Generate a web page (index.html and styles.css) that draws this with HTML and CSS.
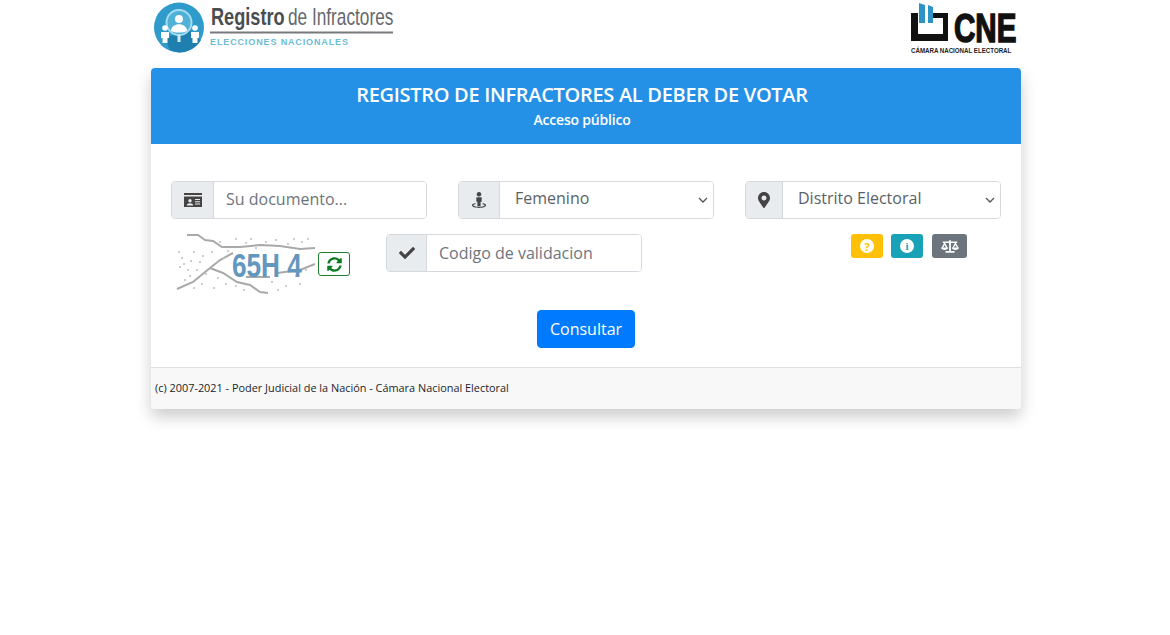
FILE: index.html
```html
<!DOCTYPE html>
<html lang="es">
<head>
  <meta charset="UTF-8">
  <title>Registro de Infractores</title>
  <link rel="stylesheet" href="styles.css">
</head>
<body>

<div class="container">
  <!-- Logos -->
  <div class="logos">
    <svg class="logo-left" viewBox="0 0 250 56" width="250" height="56">
      <circle cx="28" cy="27.500" r="25" fill="#2f9bcb"/>
      <path d="M28 52.500A25 25 0 0 0 50 40L38 30 14 38 19 50Z" fill="#1f7fae"/>
      <circle cx="28" cy="22.500" r="12.500" fill="#4fb0d8" stroke="#a5dcf0" stroke-width="2"/>
      <circle cx="28" cy="19" r="4" fill="#fff"/>
      <path d="M20 31c0-9 16-9 16 0-4 2-12 2-16 0Z" fill="#fff"/>
      <rect x="26.500" y="35" width="3" height="7" fill="#cfeaf5"/>
      <circle cx="14" cy="28" r="2.800" fill="#fff"/>
      <path d="M10 32h8v6h-1.500v5h-5v-5H10Z" fill="#fff"/>
      <circle cx="44" cy="28" r="2.800" fill="#fff"/>
      <path d="M40 32h8v6h-1.500v5h-5v-5H40Z" fill="#fff"/>
      <text class="logo-strong" transform="translate(60 25) scale(.79 1)">Registro</text>
      <text class="logo-light" transform="translate(137 25) scale(.75 1)">de Infractores</text>
      <rect x="59" y="31.500" width="183" height="2" fill="#77797c"/>
      <text class="logo-sub" x="59" y="44.500" textLength="138">ELECCIONES NACIONALES</text>
    </svg>
    <svg class="logo-right" viewBox="0 0 115 56" width="115" height="56">
      <path d="M5 13h7v21h25V18H26v-5h16v28H5Z" fill="#111"/>
      <path d="M13 3l6 2v18h-6ZM22 5l5 2v16h-5Z" fill="#2d93c4"/>
      <text class="logo-cne" transform="translate(48 42) scale(.74 1)">CNE</text>
      <text class="logo-caption" transform="translate(5 53) scale(.77 1)">CÁMARA NACIONAL ELECTORAL</text>
    </svg>
  </div>

  <div class="card">
    <div class="card-header">
      <h1>REGISTRO DE INFRACTORES AL DEBER DE VOTAR</h1>
      <p>Acceso público</p>
    </div>

    <div class="card-body">
      <!-- Fila de campos -->
      <div class="fields">
        <div class="input-group">
          <span class="addon addon-id">
            <svg class="icon icon-id" viewBox="0 0 18 14"><path d="M0 0h18v2H0Z"/><path d="M0 3.500h18V14H0ZM6 6a1.700 1.700 0 1 0 0 3.400A1.700 1.700 0 0 0 6 6ZM2.800 12.500h6.400c0-3-6.400-3-6.400 0ZM11 6v1h5V6Zm0 2.200v1h5v-1Zm0 2.200v1h5v-1Z" fill-rule="evenodd"/></svg>
          </span>
          <input type="text" placeholder="Su documento...">
        </div>
        <div class="input-group">
          <span class="addon">
            <svg class="icon icon-street" viewBox="0 0 18 18"><circle cx="9" cy="2.500" r="2.500"/><path d="M6 6h6v5h-1.200v5H7.200v-5H6Z"/><path d="M5 12.500C2.500 13 1 14 1 15c0 1.700 3.500 3 8 3s8-1.300 8-3c0-1-1.500-2-4-2.500v1.300c1.500.4 2.500.8 2.500 1.200 0 .8-2.900 1.700-6.500 1.700s-6.500-.9-6.500-1.700c0-.4 1-.8 2.500-1.200Z"/></svg>
          </span>
          <select>
            <option>Femenino</option>
            <option>Masculino</option>
          </select>
        </div>
        <div class="input-group">
          <span class="addon addon-marker">
            <svg class="icon icon-marker" viewBox="0 0 384 512"><path d="M172.268 501.670C26.970 291.031 0 269.413 0 192 0 85.961 85.961 0 192 0s192 85.961 192 192c0 77.413-26.970 99.031-172.268 309.670-9.535 13.774-29.930 13.773-39.464 0zM192 272c44.183 0 80-35.817 80-80s-35.817-80-80-80-80 35.817-80 80 35.817 80 80 80z"/></svg>
          </span>
          <select>
            <option>Distrito Electoral</option>
          </select>
        </div>
      </div>

      <!-- Captcha y validacion -->
      <div class="validation">
        <div class="captcha">
          <svg class="captcha-img" viewBox="0 0 140 60" width="140" height="60">
            <path class="captcha-line" d="M11 1h11l7 5 8 1 9 6 18 0 20-2 20 1 20 3 15-1M1 55l16-7 17-14 10-8 13-7M34 34l13 5 14 9 13 3 10 7 8 1M101 39l23-3 15-6M70 43h24"/>
            <g class="captcha-dots">
              <circle cx="6" cy="24" r="1"/><circle cx="12" cy="36" r="1"/><circle cx="18" cy="18" r="1"/><circle cx="9" cy="46" r="1"/>
              <circle cx="24" cy="28" r="1"/><circle cx="30" cy="40" r="1"/><circle cx="44" cy="8" r="1"/><circle cx="52" cy="17" r="1"/>
              <circle cx="70" cy="9" r="1"/><circle cx="80" cy="14" r="1"/><circle cx="100" cy="6" r="1"/><circle cx="112" cy="10" r="1"/>
              <circle cx="126" cy="8" r="1"/><circle cx="132" cy="5" r="1"/><circle cx="120" cy="42" r="1"/><circle cx="110" cy="52" r="1"/>
              <circle cx="60" cy="52" r="1"/><circle cx="38" cy="54" r="1"/><circle cx="26" cy="50" r="1"/><circle cx="130" cy="36" r="1"/>
              <circle cx="15" cy="27" r="1"/><circle cx="4" cy="33" r="1"/><circle cx="48" cy="24" r="1"/><circle cx="96" cy="48" r="1"/>
              <circle cx="3" cy="18" r="1"/><circle cx="8" cy="30" r="1"/><circle cx="14" cy="42" r="1"/><circle cx="21" cy="36" r="1"/>
              <circle cx="27" cy="22" r="1"/><circle cx="36" cy="18" r="1"/><circle cx="60" cy="5" r="1"/><circle cx="75" cy="5" r="1"/>
              <circle cx="90" cy="8" r="1"/><circle cx="118" cy="5" r="1"/><circle cx="68" cy="56" r="1"/><circle cx="50" cy="50" r="1"/>
              <circle cx="102" cy="56" r="1"/><circle cx="124" cy="50" r="1"/><circle cx="42" cy="44" r="1"/><circle cx="18" cy="54" r="1"/>
            </g>
            <text class="captcha-text" transform="translate(56 42.500) scale(.77 1)">65H 4</text>
          </svg>
          <button class="btn-refresh" type="button">
            <svg class="icon-sync" viewBox="0 0 512 512"><path d="M370.720 133.280C339.458 104.008 298.888 87.962 255.848 88c-77.458.068-144.328 53.178-162.791 126.850-1.344 5.363-6.122 9.150-11.651 9.150H24.103c-7.498 0-13.194-6.807-11.807-14.176C33.933 94.924 134.813 8 256 8c66.448 0 126.791 26.136 171.315 68.685L463.030 40.970C478.149 25.851 504 36.559 504 57.941V192c0 13.255-10.745 24-24 24H345.941c-21.382 0-32.090-25.851-16.971-40.971l41.750-41.749zM32 296h134.059c21.382 0 32.090 25.851 16.971 40.971l-41.750 41.750c31.262 29.273 71.835 45.319 114.876 45.280 77.418-.07 144.315-53.144 162.787-126.849 1.344-5.363 6.122-9.150 11.651-9.150h57.304c7.498 0 13.194 6.807 11.807 14.176C478.067 417.076 377.187 504 256 504c-66.448 0-126.791-26.136-171.315-68.685L48.970 471.030C33.851 486.149 8 475.441 8 454.059V320c0-13.255 10.745-24 24-24z"/></svg>
          </button>
        </div>
        <div class="input-group">
          <span class="addon">
            <svg class="icon icon-check" viewBox="0 0 512 512"><path d="M173.898 439.404l-166.400-166.400c-9.997-9.997-9.997-26.206 0-36.204l36.203-36.204c9.997-9.998 26.207-9.998 36.204 0L192 312.690 432.095 72.596c9.997-9.997 26.207-9.997 36.204 0l36.203 36.204c9.997 9.997 9.997 26.206 0 36.204l-294.400 294.401c-9.998 9.997-26.207 9.997-36.204-.001z"/></svg>
          </span>
          <input type="text" placeholder="Codigo de validacion">
        </div>
        <div class="help-buttons">
          <span class="btn-help btn-yellow"><span class="dot dot-yellow">?</span></span>
          <span class="btn-help btn-teal"><span class="dot dot-teal">i</span></span>
          <span class="btn-help btn-gray">
            <svg class="icon-scale" viewBox="0 0 20 14"><path d="M9 0h2v12h4v2H5v-2h4Z"/><path d="M2 1.500h16v1.600H2Z"/><path d="M4 2L.6 8.500h1.700L4 5.200l1.700 3.300h1.700ZM16 2l-3.400 6.500h1.700L16 5.200l1.700 3.300h1.700Z"/><path d="M0 8.200h8c0 3.600-8 3.600-8 0ZM12 8.200h8c0 3.600-8 3.600-8 0Z"/></svg>
          </span>
        </div>
      </div>

      <div class="actions">
        <button class="btn-primary" type="button">Consultar</button>
      </div>
    </div>

    <div class="card-footer">(c) 2007-2021 - Poder Judicial de la Nación - Cámara Nacional Electoral</div>
  </div>
</div>

</body>
</html>
```

FILE: styles.css
```css
* {
  box-sizing: border-box;
}
body {
  font-family: "Open Sans", Arial, sans-serif;
  margin: 0;
  padding: 0;
  min-height: 635px;
  background: #fff;
  color: #212529;
}
.container {
  width: 870px;
  margin: 0 0 0 151px;
  padding-bottom: 40px;
}
.logos {
  height: 68px;
  display: flex;
  justify-content: space-between;
  align-items: flex-start;
}
.logo-left, .logo-right {
  display: block;
}
.logo-strong {
  font: bold 23px "Liberation Sans", Arial, sans-serif;
  fill: #4a4d50;
}
.logo-light {
  font: 23px "Liberation Sans", Arial, sans-serif;
  fill: #66696c;
}
.logo-sub {
  font: bold 9px "Liberation Sans", Arial, sans-serif;
  fill: #6bbcd9;
}
.logo-cne {
  font: bold 40px "Liberation Sans", Arial, sans-serif;
  fill: #111;
  stroke: #111;
  stroke-width: 1.500;
}
.logo-caption {
  font: bold 8px "Liberation Sans", Arial, sans-serif;
  fill: #222;
}
.card {
  height: 341px;
  display: flex;
  flex-direction: column;
  border-radius: 4px;
  overflow: hidden;
  background: #fff;
  box-shadow: 0 8px 16px rgba(0,0,0,0.2);
}
.card-header {
  flex: none;
  height: 76px;
  background: #2591e6;
  color: #fff;
  text-align: center;
  padding: 13px 8px 0 0;
}
.card-header h1 {
  font-size: 20px;
  line-height: 27px;
  font-weight: 600;
  margin: 0;
  letter-spacing: -0.3px;
}
.card-header p {
  font-size: 14px;
  line-height: 19px;
  font-weight: 600;
  margin: 2px 0 0;
  letter-spacing: -0.2px;
}
.card-body {
  flex: 1;
  padding: 37px 20px 0;
}
.fields {
  display: grid;
  grid-template-columns: repeat(3, 256px);
  gap: 31px;
}
.input-group {
  display: flex;
  width: 256px;
  height: 38px;
  border: 1px solid #d5d9de;
  border-radius: 4px;
  overflow: hidden;
  background: #fff;
}
.addon {
  width: 41px;
  flex: none;
  display: flex;
  align-items: center;
  justify-content: center;
  background: #e9ecef;
  border-right: 1px solid #d5d9de;
}
.addon-id {
  width: 42px;
}
.addon-marker {
  width: 37px;
}
.icon {
  fill: #444;
  display: block;
}
.icon-id {
  width: 18px;
  height: 14px;
}
.icon-street {
  width: 16px;
  height: 18px;
}
.icon-marker {
  width: 12px;
  height: 16px;
}
.icon-check {
  width: 16px;
  height: 16px;
}
input, select {
  flex: 1;
  min-width: 0;
  border: 0;
  outline: 0;
  background: #fff;
  font-family: inherit;
  font-size: 16px;
  color: #5a6268;
}
input {
  padding: 0 12px 2px;
}
.validation .addon {
  width: 40px;
}
.validation input {
  padding-bottom: 0;
}
input::placeholder {
  color: #6c757d;
  opacity: 1;
}
select {
  appearance: none;
  padding: 0 24px 5px 15px;
  background-image: url("data:image/svg+xml,%3Csvg xmlns='http://www.w3.org/2000/svg' width='10' height='6'%3E%3Cpath d='M1 1l4 4 4-4' fill='none' stroke='%23555' stroke-width='1.300'/%3E%3C/svg%3E");
  background-repeat: no-repeat;
  background-position: right 5px center;
}
.validation {
  display: flex;
  margin-top: 15px;
  align-items: flex-start;
}
.captcha {
  width: 215px;
  display: flex;
  align-items: flex-start;
  padding-left: 5px;
}
.captcha-img {
  display: block;
  flex: none;
}
.captcha-line {
  fill: none;
  stroke: #a9a9a9;
  stroke-width: 2;
}
.captcha-dots {
  fill: #bdbdbd;
}
.captcha-text {
  font: bold 34px "Liberation Sans", Arial, sans-serif;
  fill: #6497bd;
}
.btn-refresh {
  width: 32px;
  height: 24px;
  margin: 18px 0 0 2px;
  padding: 0;
  display: flex;
  align-items: center;
  justify-content: center;
  background: #fff;
  border: 1px solid #1e7e34;
  border-radius: 3px;
}
.icon-sync {
  width: 15px;
  height: 15px;
  fill: #0c7a1e;
}
.help-buttons {
  margin-left: 209px;
  display: flex;
  gap: 8px;
}
.btn-help {
  height: 24px;
  display: flex;
  align-items: center;
  justify-content: center;
  border-radius: 3px;
}
.btn-yellow {
  width: 32px;
  background: #ffc107;
}
.btn-teal {
  width: 32px;
  background: #17a2b8;
}
.btn-gray {
  width: 35px;
  margin-left: 1px;
  background: #6c757d;
}
.dot {
  width: 14px;
  height: 14px;
  border-radius: 50%;
  background: #fff;
  display: flex;
  align-items: center;
  justify-content: center;
  font-size: 11px;
  font-weight: 700;
  line-height: 1;
}
.dot-yellow {
  color: #ffc107;
}
.dot-teal {
  color: #17a2b8;
  font-family: "Liberation Serif", serif;
}
.icon-scale {
  width: 18px;
  height: 13px;
  fill: #fff;
}
.actions {
  margin-top: 16px;
  text-align: center;
}
.btn-primary {
  width: 98px;
  height: 38px;
  background: #007bff;
  color: #fff;
  border: 1px solid #007bff;
  border-radius: 4px;
  font-family: inherit;
  font-size: 16px;
}
.card-footer {
  flex: none;
  height: 42px;
  background: #f8f8f8;
  border-top: 1px solid #dfdfdf;
  padding-left: 4px;
  font-size: 10.900px;
  line-height: 40px;
}
```
